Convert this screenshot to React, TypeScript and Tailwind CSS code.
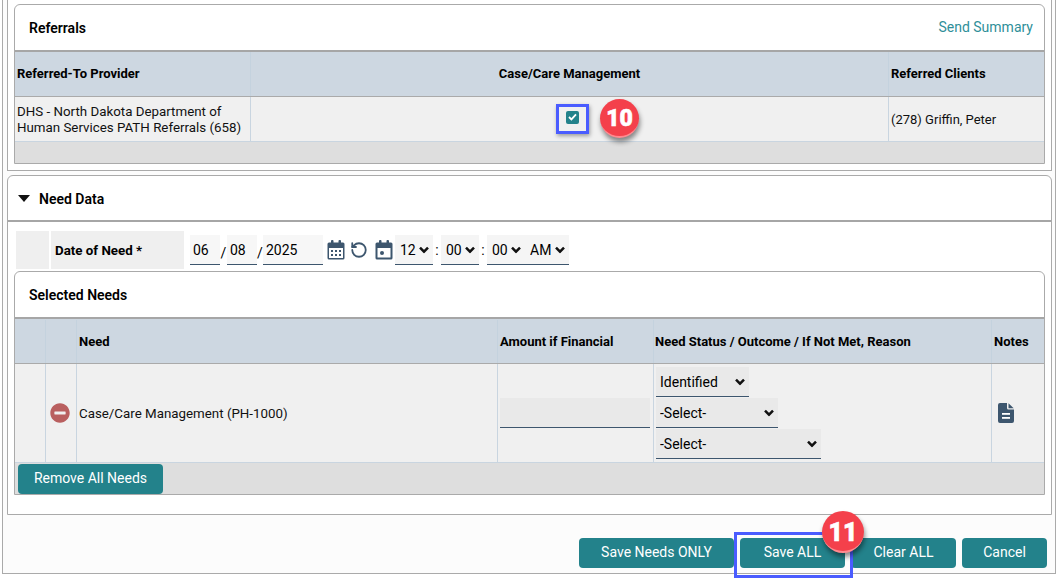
import { RotateCcw } from "lucide-react";
import { FaMinusCircle } from "react-icons/fa";

const font = { fontFamily: '"Roboto", "Liberation Sans", sans-serif' };

const CalendarGrid = () => (
  <svg width="18" height="20" viewBox="0 0 18 20" className="shrink-0">
    <rect x="0.5" y="2.5" width="17" height="17" rx="1.5" fill="#3d566e" />
    <rect x="4" y="0" width="2.5" height="5" rx="1" fill="#3d566e" />
    <rect x="11.5" y="0" width="2.5" height="5" rx="1" fill="#3d566e" />
    <rect x="2" y="8" width="14" height="10" fill="#fff" />
    <g fill="#3d566e">
      <rect x="4" y="10" width="2" height="2" />
      <rect x="8" y="10" width="2" height="2" />
      <rect x="12" y="10" width="2" height="2" />
      <rect x="4" y="14" width="2" height="2" />
      <rect x="8" y="14" width="2" height="2" />
      <rect x="12" y="14" width="2" height="2" />
    </g>
  </svg>
);

const CalendarDot = () => (
  <svg width="18" height="20" viewBox="0 0 18 20" className="shrink-0">
    <rect x="0.5" y="2.5" width="17" height="17" rx="1.5" fill="#3d566e" />
    <rect x="4" y="0" width="2.5" height="5" rx="1" fill="#3d566e" />
    <rect x="11.5" y="0" width="2.5" height="5" rx="1" fill="#3d566e" />
    <rect x="2.5" y="8" width="13" height="9.5" fill="#fff" />
    <rect x="5" y="11" width="4" height="4" rx="2" fill="#3d566e" />
  </svg>
);

const NoteIcon = () => (
  <svg width="16" height="20" viewBox="0 0 16 20">
    <path
      d="M2 0h7v5a1.5 1.5 0 0 0 1.5 1.5H16V18a2 2 0 0 1-2 2H2a2 2 0 0 1-2-2V2a2 2 0 0 1 2-2z"
      fill="#3d566e"
    />
    <path d="M10.5 0.3L15.7 5.2H11a.5.5 0 0 1-.5-.5z" fill="#3d566e" />
    <rect x="4" y="10" width="8" height="1.8" fill="#fff" />
    <rect x="4" y="14" width="8" height="1.8" fill="#fff" />
  </svg>
);

const Chevron = () => (
  <svg
    width="10"
    height="7"
    viewBox="0 0 10 7"
    className="absolute right-[4px] top-1/2 -translate-y-1/2 pointer-events-none"
  >
    <path d="M1 1.2l4 4 4-4" fill="none" stroke="#111" strokeWidth="2.5" />
  </svg>
);

const TimeSelect = ({ value, className }: { value: string; className: string }) => (
  <div className={`relative h-[30px] ${className}`}>
    <select
      defaultValue={value}
      className="appearance-none w-full h-full bg-[#f5f5f5] border-b border-[#3d566e] pl-[5px] pt-[2px] text-[14px] text-black"
    >
      <option>{value}</option>
    </select>
    <Chevron />
  </div>
);

const FieldSelect = ({ value, className }: { value: string; className: string }) => (
  <div className={`relative h-[30px] ${className}`}>
    <select
      defaultValue={value}
      className="appearance-none block w-full h-full bg-[#e9e9e9] border-b border-[#3d566e] pl-[4px] pt-[2px] text-[14px] text-black"
    >
      <option>{value}</option>
    </select>
    <Chevron />
  </div>
);

const Button = ({ label, className }: { label: string; className: string }) => (
  <button className={`h-[30px] rounded-[4px] bg-[#23828b] pb-[2px] text-[14px] text-white ${className}`}>
    {label}
  </button>
);

const Badge = ({ label, className }: { label: string; className: string }) => (
  <div
    className={`absolute flex items-center justify-center rounded-full bg-[#f4404b] border-b-2 border-[#ff8a90] pt-[3px] text-white font-black [-webkit-text-stroke:0.6px_white] shadow-[1px_4px_5px_rgba(0,0,0,0.45)] ${className}`}
  >
    {label}
  </div>
);

const Referrals = () => (
  <div className="h-[171px] border-x border-b border-[#aaa] bg-white px-[6px] pt-[4px]">
    <div className="rounded-t-[6px] border border-[#aaa] bg-white">
      <div className="h-[47px] border-b-2 border-[#a6a6a6] flex items-center justify-between pl-[14px] pr-[11px] pt-[2px]">
        <span className="text-[14px] font-semibold text-black">Referrals</span>
        <span className="text-[14px] text-[#2f8f99] -mt-[2px]">Send Summary</span>
      </div>
      <div className="flex h-[45px] bg-[#cdd7e1] border-b border-[#aaa] text-[13px] font-bold text-black">
        <div className="w-[236px] border-r border-[#c4d2de] pl-[2px] flex items-center">Referred-To Provider</div>
        <div className="w-[638px] border-r border-[#c4d2de] flex items-center justify-center">Case/Care Management</div>
        <div className="flex-1 pl-[2px] flex items-center">Referred Clients</div>
      </div>
      <div className="flex h-[45px] bg-[#f0f0f0] border-b border-[#c9d5e0] text-[13.33px] text-[#111]">
        <div className="w-[236px] border-r border-[#c9d5e0] pl-[2px] pt-[2px] flex items-center leading-[16px]">
          DHS - North Dakota Department of Human Services PATH Referrals (658)
        </div>
        <div className="w-[638px] border-r border-[#c9d5e0] flex items-center justify-center">
          <div className="w-[13px] h-[13px] ml-[6px] rounded-[2px] bg-[#23828b] flex items-center justify-center -mt-[4px]">
            <svg width="9" height="8" viewBox="0 0 9 8">
              <path d="M1 4l2.4 2.4L8 1.4" fill="none" stroke="#fff" strokeWidth="1.8" />
            </svg>
          </div>
        </div>
        <div className="flex-1 pl-[2px] pt-[1px] flex items-center text-[13px]">(278) Griffin, Peter</div>
      </div>
      <div className="h-[21px] bg-[#dedede]" />
    </div>
  </div>
);

const DateRow = () => (
  <div className="flex h-[38px] ml-[8px] items-center text-[14px] text-black">
    <div className="w-[33px] h-full bg-[#efefef]" />
    <div className="w-[133px] h-full ml-[2px] bg-[#efefef] flex items-center pl-[4px] pt-[2px] text-[13.33px] font-bold">
      Date of Need *
    </div>
    <div className="w-[30px] h-[30px] ml-[6px] bg-[#f7f7f7] border-b border-[#3d566e] pl-[3px] pt-[2px] flex items-center">06</div>
    <div className="w-[7px] pt-[6px] text-center">/</div>
    <div className="w-[30px] h-[30px] bg-[#f7f7f7] border-b border-[#3d566e] pl-[3px] pt-[2px] flex items-center">08</div>
    <div className="w-[6px] pt-[6px] text-center">/</div>
    <div className="w-[60px] h-[30px] bg-[#f7f7f7] border-b border-[#3d566e] pl-[3px] pt-[2px] flex items-center">2025</div>
    <div className="ml-[4px]">
      <CalendarGrid />
    </div>
    <RotateCcw size={18} strokeWidth={2.4} color="#3d566e" className="ml-[5px]" />
    <div className="ml-[7px]">
      <CalendarDot />
    </div>
    <TimeSelect value="12" className="w-[38px] ml-[2px]" />
    <span className="w-[8px] text-center">:</span>
    <TimeSelect value="00" className="w-[38px]" />
    <span className="w-[8px] text-center">:</span>
    <TimeSelect value="00" className="w-[38px]" />
    <TimeSelect value="AM" className="w-[44px]" />
  </div>
);

const SelectedNeeds = () => (
  <div className="mt-[2px] rounded-t-[6px] border border-[#aaa] bg-white">
    <div className="h-[47px] border-b-2 border-[#a6a6a6] flex items-center pl-[14px] pt-[2px]">
      <span className="text-[14px] font-semibold text-black">Selected Needs</span>
    </div>
    <div className="flex h-[45px] bg-[#cdd7e1] border-b border-[#aaa] pt-[1px] text-[13px] font-bold text-black">
      <div className="w-[31px] border-r border-[#c4d2de]" />
      <div className="w-[31px] border-r border-[#c4d2de]" />
      <div className="w-[421px] border-r border-[#c4d2de] pl-[2px] flex items-center">Need</div>
      <div className="w-[156px] border-r border-[#c4d2de] pl-[2px] flex items-center">Amount if Financial</div>
      <div className="w-[338px] border-r border-[#c4d2de] pl-[1px] flex items-center">
        Need Status / Outcome / If Not Met, Reason
      </div>
      <div className="flex-1 pl-[2px] flex items-center">Notes</div>
    </div>
    <div className="flex h-[99px] bg-[#f0f0f0] border-b border-[#c9d5e0] text-[13.33px] text-[#111]">
      <div className="w-[31px] border-r border-[#c9d5e0]" />
      <div className="w-[31px] border-r border-[#c9d5e0] pr-[2px] flex items-center justify-center">
        <FaMinusCircle size={20} color="#b95f5f" />
      </div>
      <div className="w-[421px] border-r border-[#c9d5e0] pl-[2px] pt-[2px] flex items-center">
        Case/Care Management (PH-1000)
      </div>
      <div className="w-[156px] border-r border-[#c9d5e0] pl-[2px] flex items-center">
        <div className="w-[150px] h-[30px] bg-[#e9e9e9] border-b border-[#3d566e]" />
      </div>
      <div className="w-[338px] border-r border-[#c9d5e0] pl-[2px] pt-[3px] flex flex-col gap-[1px]">
        <FieldSelect value="Identified" className="w-[93px]" />
        <FieldSelect value="-Select-" className="w-[122px]" />
        <FieldSelect value="-Select-" className="w-[165px]" />
      </div>
      <div className="flex-1 flex items-center pl-[6px]">
        <NoteIcon />
      </div>
    </div>
    <div className="h-[31px] bg-[#dedede] pl-[3px] pt-[1px]">
      <Button label="Remove All Needs" className="w-[145px]" />
    </div>
  </div>
);

const NeedData = () => (
  <div className="mt-[4px] h-[340px] rounded-t-[6px] border border-[#aaa] bg-white">
    <div className="h-[46px] border-b-2 border-[#a6a6a6] flex items-center pl-[10px] pt-[2px]">
      <svg width="12" height="7" viewBox="0 0 12 7" className="-mt-[2px]">
        <path d="M0 0h12L6 7z" fill="#111" />
      </svg>
      <span className="ml-[9px] text-[14px] font-semibold text-black">Need Data</span>
    </div>
    <div className="pt-[9px]">
      <DateRow />
      <div className="px-[6px]">
        <SelectedNeeds />
      </div>
    </div>
  </div>
);

export default function App() {
  return (
    <div className="relative w-[1062px] h-[578px] overflow-hidden bg-white" style={font}>
      <div className="ml-[2px] w-[1054px] h-[574px] border-x border-b border-[#aaa] bg-[#fcfcfc] pl-[4px] pr-[3px]">
        <Referrals />
        <NeedData />
        <div className="mt-[23px] -mr-[3px] pr-[8px] flex justify-end gap-[6px]">
          <Button label="Save Needs ONLY" className="w-[155px]" />
          <Button label="Save ALL" className="w-[105px]" />
          <Button label="Clear ALL" className="w-[105px]" />
          <Button label="Cancel" className="w-[85px]" />
        </div>
      </div>

      <div className="absolute left-[556px] top-[104px] w-[33px] h-[30px] border-[3px] border-[#4a5cff] shadow-[1px_2px_4px_rgba(0,0,0,0.35)]" />
      <Badge label="10" className="left-[600px] top-[99px] w-[39px] h-[39px] text-[23px]" />
      <div className="absolute left-[734px] top-[532px] w-[119px] h-[46px] border-[3px] border-[#4a5cff]" />
      <Badge label="11" className="left-[822px] top-[511px] w-[42px] h-[42px] text-[25px]" />
    </div>
  );
}
